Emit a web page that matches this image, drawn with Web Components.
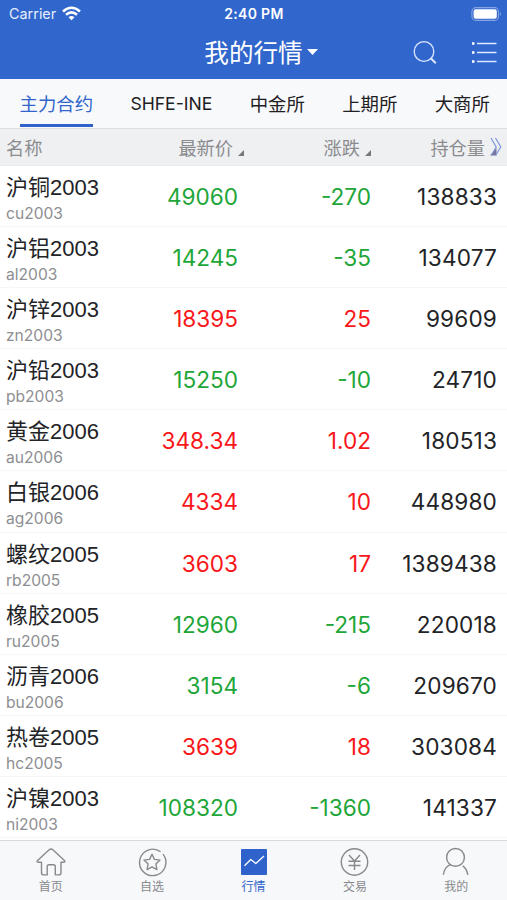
<!DOCTYPE html>
<html lang="zh-CN">
<head>
<meta charset="UTF-8">
<meta name="viewport" content="width=device-width, initial-scale=1">
<title>我的行情</title>
<style>
    body {
        margin: 0;
        background: #fff;
        font-family: Inter, "Noto Sans CJK SC", sans-serif;
    }
</style>
</head>
<body>
<quote-app></quote-app>

<script>
const QUOTES = [
    ['沪铜2003', 'cu2003', '49060', '-270', '138833'],
    ['沪铝2003', 'al2003', '14245', '-35', '134077'],
    ['沪锌2003', 'zn2003', '18395', '25', '99609'],
    ['沪铅2003', 'pb2003', '15250', '-10', '24710'],
    ['黄金2006', 'au2006', '348.34', '1.02', '180513'],
    ['白银2006', 'ag2006', '4334', '10', '448980'],
    ['螺纹2005', 'rb2005', '3603', '17', '1389438'],
    ['橡胶2005', 'ru2005', '12960', '-215', '220018'],
    ['沥青2006', 'bu2006', '3154', '-6', '209670'],
    ['热卷2005', 'hc2005', '3639', '18', '303084'],
    ['沪镍2003', 'ni2003', '108320', '-1360', '141337']
];

const ICONS = {
    home: '<path d="M9.5 17.2H6.2Q4.2 17 5.6 15.4L17.4 4.6Q19 3.3 20.6 4.6L32.4 15.4Q33.8 17 31.8 17.2H29V27.8Q29 29.9 27 29.9H23.3V21.5Q23.3 19.7 21.5 19.7H17Q15.2 19.7 15.2 21.5V29.9H11.5Q9.5 29.9 9.5 27.8Z"/>',
    star: '<path d="M30 9.1A13.2 13.2 0 1 1 27.6 6.8"/><path d="M19 9.2L21.4 14.4L27 15.1L22.9 19L23.9 24.6L19 21.9L14.1 24.6L15.1 19L11 15.1L16.6 14.4Z"/>',
    chart: '<rect x="6" y="4" width="26" height="26" rx="1" fill="#2f63cb" stroke="none"/><path d="M9.5 20.7L15.8 14.5L20.8 18.5L29 11" stroke="#fff" stroke-width="1.3"/>',
    trade: '<circle cx="18.5" cy="17" r="13.2"/><path d="M13 10L18.5 16L24 10M18.5 16V25M12.5 16.3H24.5M12.5 20.5H24.5"/>',
    user: '<circle cx="18.5" cy="12.4" r="8.9"/><path d="M13.3 19.7C9.5 21.4 6.9 25 6.4 29.8M25.7 20.9C28.5 22.8 30.2 25.7 30.8 29.8"/>'
};

class StatusBar extends HTMLElement {
    constructor() {
        super();
        this.attachShadow({ mode: 'open' });
    }

    connectedCallback() {
        this.shadowRoot.innerHTML = `
            <style>
                :host {
                    display: grid;
                    grid-template-columns: 1fr auto 1fr;
                    align-items: center;
                    height: 27px;
                    padding: 0 5px 0 9px;
                    color: #fff;
                    font-size: 14.4px;
                    line-height: 27px;
                }
                .carrier {
                    display: flex;
                    align-items: center;
                    gap: 6px;
                    color: #e6efff;
                }
                .time {
                    font-size: 14px;
                    font-weight: 600;
                    letter-spacing: 0.3px;
                    margin-left: -3px;
                }
                .battery { justify-self: end; }
                svg { display: block; }
            </style>
            <div class="carrier">
                <span>Carrier</span>
                <svg width="19" height="15" viewBox="0 0 19 15" fill="none" stroke="#fff" stroke-width="2.5">
                    <path d="M1 5.5Q9.5 -2 18 5.5"/>
                    <path d="M4 8.8Q9.5 4 15 8.8"/>
                    <path d="M6.5 11.2Q9.5 8.7 12.5 11.2L9.5 14.3Z" fill="#fff" stroke="none"/>
                </svg>
            </div>
            <div class="time">2:40 PM</div>
            <svg class="battery" width="31" height="14" viewBox="0 0 31 14">
                <rect x="0.9" y="0.6" width="26.6" height="12.8" rx="4" fill="none" stroke="#86a5e4" stroke-width="1.1"/>
                <rect x="2.6" y="2.2" width="23.2" height="9.6" rx="2" fill="#fff"/>
                <path d="M29 5Q31.2 7 29 9Z" fill="#86a5e4"/>
            </svg>
        `;
    }
}

class NavBar extends HTMLElement {
    constructor() {
        super();
        this.attachShadow({ mode: 'open' });
    }

    connectedCallback() {
        this.shadowRoot.innerHTML = `
            <style>
                :host {
                    display: grid;
                    grid-template-columns: 1fr auto 1fr;
                    align-items: center;
                    height: 52px;
                    padding: 0 10px;
                    color: #fff;
                }
                .title {
                    display: flex;
                    align-items: center;
                    gap: 4px;
                    grid-column: 2;
                    margin-left: 15px;
                    font-size: 24.6px;
                    line-height: 50px;
                }
                .title svg { margin-top: -2px; }
                .actions {
                    display: flex;
                    justify-content: flex-end;
                    gap: 34px;
                }
                svg { display: block; }
            </style>
            <div class="title">
                <slot></slot>
                <svg width="11" height="6" viewBox="0 0 11 6"><path d="M0 0H11L5.5 6Z" fill="#fff"/></svg>
            </div>
            <div class="actions">
                <svg width="24" height="24" viewBox="0 0 24 24" fill="none" stroke="#dce8ff">
                    <circle cx="11" cy="10.5" r="9.8" stroke-width="1.3"/>
                    <path d="M17.5 17L22.8 22.3" stroke-width="2"/>
                </svg>
                <svg width="26" height="24" viewBox="0 0 26 24" fill="none" stroke="#dce8ff">
                    <path d="M6 2.5H25.5M6 11.5H25.5M6 20.5H25.5" stroke-width="1.4"/>
                    <path d="M1 2.5H3.5M1 11.5H3.5M1 20.5H3.5" stroke="#fff" stroke-width="2.5"/>
                </svg>
            </div>
        `;
    }
}

class MarketTab extends HTMLElement {
    constructor() {
        super();
        this.attachShadow({ mode: 'open' });
    }

    connectedCallback() {
        this.shadowRoot.innerHTML = `
            <style>
                :host {
                    display: block;
                    box-sizing: border-box;
                    height: 48px;
                    border-bottom: 3px solid transparent;
                    color: #1f2023;
                    font-size: 18.4px;
                    line-height: 50px;
                    white-space: nowrap;
                }
                :host([active]) {
                    color: #3165cc;
                    border-color: #2f63cb;
                }
                :host([latin]) { font-size: 17.6px; }
            </style>
            <slot></slot>
        `;
    }
}

class ColumnHeader extends HTMLElement {
    constructor() {
        super();
        this.attachShadow({ mode: 'open' });
    }

    connectedCallback() {
        this.shadowRoot.innerHTML = `
            <style>
                :host {
                    display: grid;
                    grid-template-columns: 115px 123px 127px 1fr;
                    box-sizing: border-box;
                    height: 38px;
                    padding: 0 5px 0 6px;
                    background: #eff0f2;
                    border-top: 1px solid #dcdde0;
                    border-bottom: 1px solid #e8eaec;
                    color: #8b8c8f;
                    font-size: 18.2px;
                    line-height: 38px;
                }
                div {
                    display: flex;
                    justify-content: flex-end;
                    gap: 5px;
                    white-space: nowrap;
                }
                .label { justify-content: flex-start; }
                .sort {
                    width: 6px;
                    height: 6px;
                    margin-top: 21px;
                }
                .more { margin-top: 8px; }
            </style>
            <div class="label">名称</div>
            <div>最新价<svg class="sort" viewBox="0 0 7 7"><path d="M7 0V7H0Z" fill="#77787b"/></svg></div>
            <div>涨跌<svg class="sort" viewBox="0 0 7 7"><path d="M7 0V7H0Z" fill="#77787b"/></svg></div>
            <div>持仓量<svg class="more" width="12" height="20" viewBox="0 0 12 20" fill="none">
                <path d="M0 18.5L6.5 11V18.5Z" fill="#77739a"/>
                <path d="M1 1L6.2 10L1.5 18M5.5 1L10.8 10L5.5 18.5" stroke="#7d94d8" stroke-width="1.2"/>
            </svg></div>
        `;
    }
}

class QuoteRow extends HTMLElement {
    constructor() {
        super();
        this.attachShadow({ mode: 'open' });
    }

    connectedCallback() {
        const change = this.getAttribute('change');
        const color = change.startsWith('-') ? '#1ea639' : '#f9161a';
        this.shadowRoot.innerHTML = `
            <style>
                :host {
                    display: grid;
                    grid-template-columns: 112px 120px 133px 1fr;
                    box-sizing: border-box;
                    height: 61.1px;
                    padding: 0 10px 0 6px;
                    border-bottom: 1px solid #f5f6f6;
                    background: #fff;
                    color: #222326;
                }
                .name {
                    margin-top: 6px;
                    font-family: "Liberation Sans", "Noto Sans CJK SC", sans-serif;
                    font-size: 22px;
                    line-height: 32px;
                    white-space: nowrap;
                }
                .code {
                    color: #8d8e91;
                    font-size: 15.6px;
                    line-height: 20px;
                }
                .number {
                    font-size: 22.6px;
                    line-height: 61px;
                    text-align: right;
                }
                .quote { color: ${color}; }
                .volume { letter-spacing: 0.15px; }
            </style>
            <div>
                <div class="name">${this.getAttribute('name')}</div>
                <div class="code">${this.getAttribute('code')}</div>
            </div>
            <div class="number quote">${this.getAttribute('price')}</div>
            <div class="number quote">${change}</div>
            <div class="number volume">${this.getAttribute('volume')}</div>
        `;
    }
}

class TabItem extends HTMLElement {
    constructor() {
        super();
        this.attachShadow({ mode: 'open' });
    }

    connectedCallback() {
        this.shadowRoot.innerHTML = `
            <style>
                :host {
                    display: flex;
                    flex: 1;
                    flex-direction: column;
                    align-items: center;
                    padding-top: 4px;
                    color: #88898d;
                    font-size: 12px;
                    line-height: 18px;
                }
                :host([active]) { color: #3165cc; }
                svg { display: block; }
            </style>
            <svg width="38" height="33" viewBox="0 0 38 33" fill="none" stroke="currentColor" stroke-width="1.4" stroke-linejoin="round">
                ${ICONS[this.getAttribute('icon')]}
            </svg>
            <slot></slot>
        `;
    }
}

class QuoteApp extends HTMLElement {
    constructor() {
        super();
        this.attachShadow({ mode: 'open' });
    }

    connectedCallback() {
        const rows = QUOTES.map(([name, code, price, change, volume]) => `
            <quote-row name="${name}" code="${code}" price="${price}" change="${change}" volume="${volume}"></quote-row>
        `).join('');
        this.shadowRoot.innerHTML = `
            <style>
                :host {
                    display: flex;
                    flex-direction: column;
                    width: 507px;
                    height: 900px;
                    overflow: hidden;
                }
                header { background: #3166cc; }
                .markets {
                    display: flex;
                    gap: 37.3px;
                    height: 49px;
                    padding-left: 19.5px;
                    background: #f8f9fb;
                }
                .list {
                    flex: 1;
                    min-height: 0;
                    overflow: hidden;
                }
                .tabs {
                    display: flex;
                    box-sizing: border-box;
                    height: 60px;
                    border-top: 1px solid #d8d9dc;
                    background: #f7f8fa;
                }
            </style>
            <header>
                <status-bar></status-bar>
                <nav-bar>我的行情</nav-bar>
            </header>
            <nav class="markets">
                <market-tab active>主力合约</market-tab>
                <market-tab latin>SHFE-INE</market-tab>
                <market-tab>中金所</market-tab>
                <market-tab>上期所</market-tab>
                <market-tab>大商所</market-tab>
            </nav>
            <column-header></column-header>
            <div class="list">${rows}</div>
            <nav class="tabs">
                <tab-item icon="home">首页</tab-item>
                <tab-item icon="star">自选</tab-item>
                <tab-item icon="chart" active>行情</tab-item>
                <tab-item icon="trade">交易</tab-item>
                <tab-item icon="user">我的</tab-item>
            </nav>
        `;
    }
}

customElements.define('status-bar', StatusBar);
customElements.define('nav-bar', NavBar);
customElements.define('market-tab', MarketTab);
customElements.define('column-header', ColumnHeader);
customElements.define('quote-row', QuoteRow);
customElements.define('tab-item', TabItem);
customElements.define('quote-app', QuoteApp);
</script>
</body>
</html>
